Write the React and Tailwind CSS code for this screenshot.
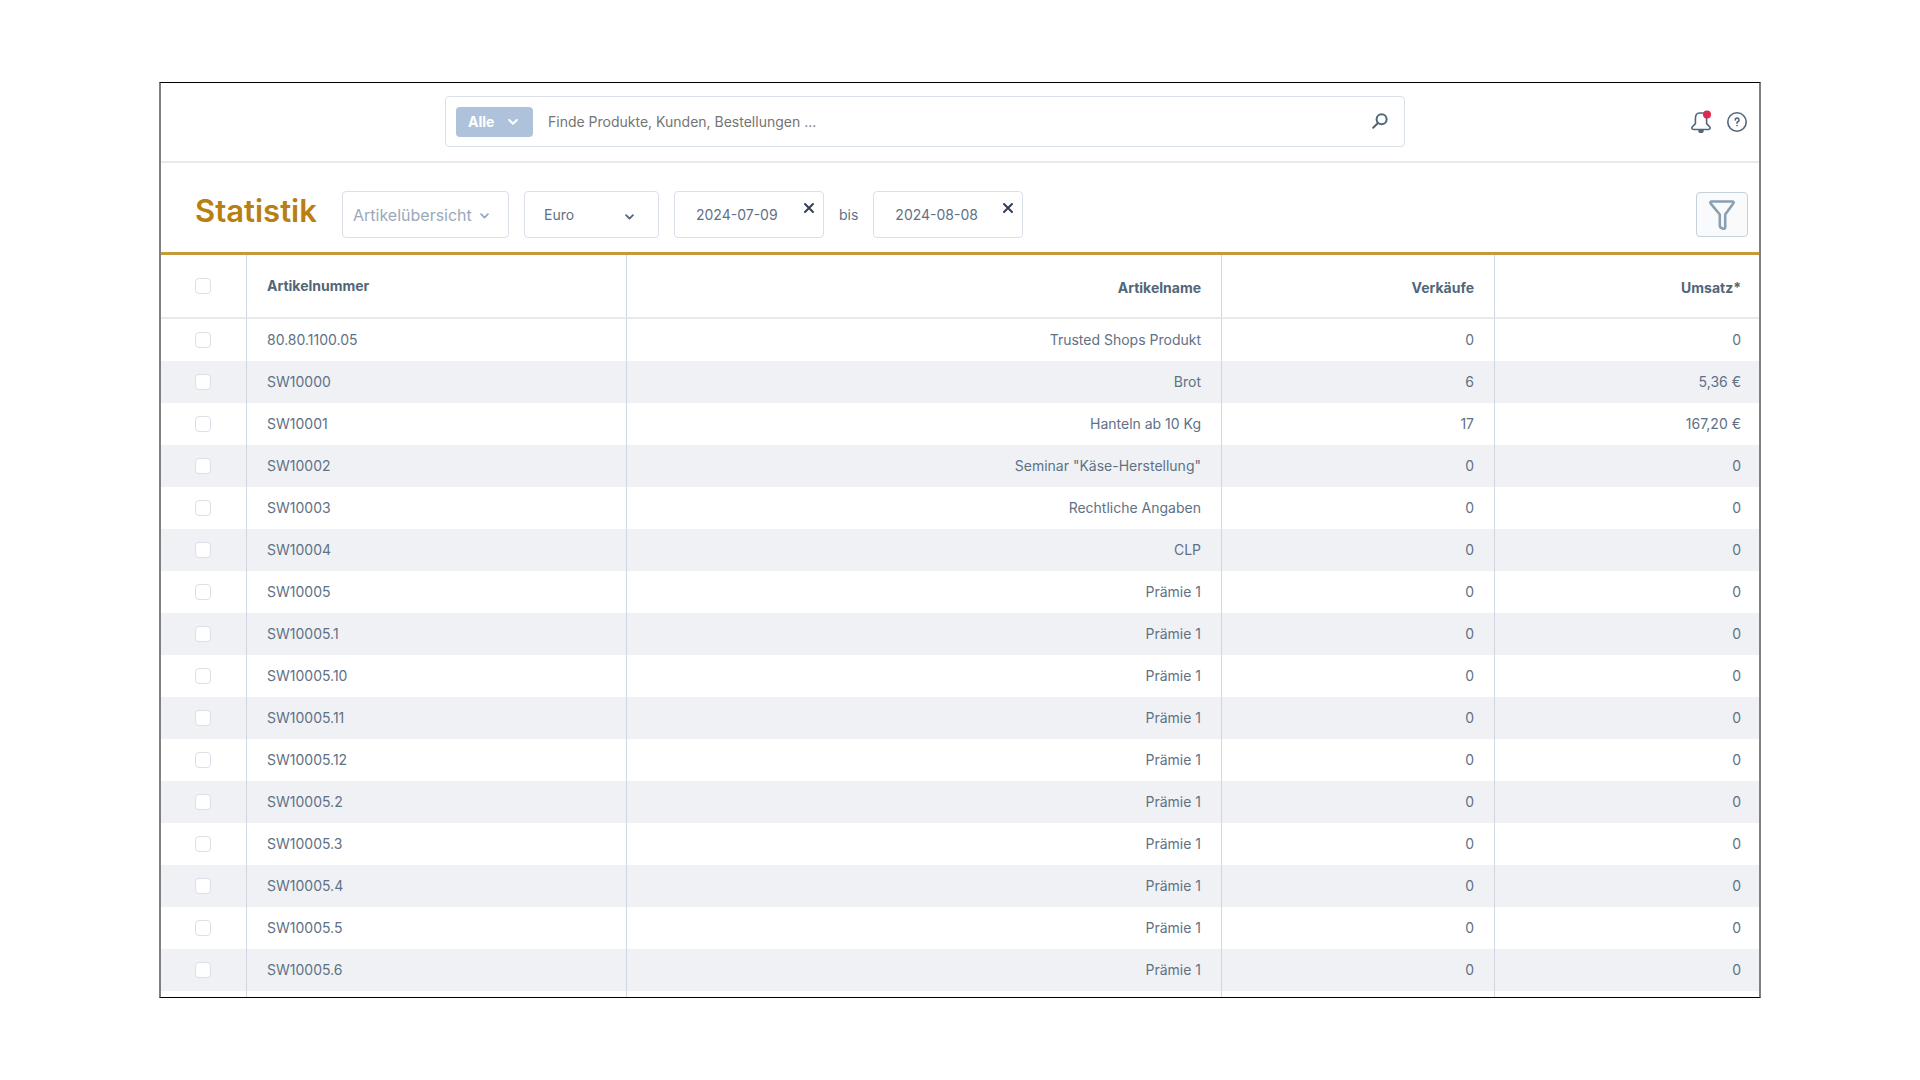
const ROWS = [
    { number: '80.80.1100.05', name: 'Trusted Shops Produkt', sales: '0', revenue: '0' },
    { number: 'SW10000', name: 'Brot', sales: '6', revenue: '5,36 €' },
    { number: 'SW10001', name: 'Hanteln ab 10 Kg', sales: '17', revenue: '167,20 €' },
    { number: 'SW10002', name: 'Seminar "Käse-Herstellung"', sales: '0', revenue: '0' },
    { number: 'SW10003', name: 'Rechtliche Angaben', sales: '0', revenue: '0' },
    { number: 'SW10004', name: 'CLP', sales: '0', revenue: '0' },
    ...['', '.1', '.10', '.11', '.12', '.2', '.3', '.4', '.5', '.6'].map((suffix) => ({
        number: `SW10005${suffix}`,
        name: 'Prämie 1',
        sales: '0',
        revenue: '0',
    })),
];

const CHECKBOX =
    'block h-4 w-4 appearance-none rounded-[4px] border border-[#d9e0e7] bg-white checked:border-[#b8860b] checked:bg-[#b8860b]';

const FIELD = 'h-[47px] rounded-[4px] border border-[#d9e0e7] bg-white';

function Chevron({ className }) {
    return (
        <svg
            viewBox="0 0 10 6"
            fill="none"
            stroke="currentColor"
            strokeWidth="2"
            strokeLinecap="round"
            strokeLinejoin="round"
            className={`pointer-events-none ${className}`}
            aria-hidden="true"
        >
            <path d="M1.2 1 5 4.8 8.8 1" />
        </svg>
    );
}

function DateField({ label, value }) {
    return (
        <div className={`${FIELD} flex w-[150px] shrink-0 justify-between pr-2`}>
            <input
                type="text"
                aria-label={label}
                defaultValue={value}
                className="w-[110px] min-w-0 bg-transparent pl-[21px] text-sm text-[#5f7185] outline-none"
            />
            <button type="button" aria-label={`${label} zurücksetzen`} className="mt-[10px] h-3 w-3 text-[#333f55]">
                <svg viewBox="0 0 12 12" stroke="currentColor" strokeWidth="2" strokeLinecap="round" className="h-3 w-3">
                    <path d="M2 2 10 10M10 2 2 10" />
                </svg>
            </button>
        </div>
    );
}

function Header() {
    return (
        <header className="flex h-20 shrink-0 items-start border-b-2 border-[#e6eaef] pt-[13px]">
            <div className="w-[284px] shrink-0" />
            <div className="flex h-[51px] min-w-0 flex-1 items-center rounded-[4px] border border-[#d9e0e7] pl-[10px] pr-4">
                <button
                    type="button"
                    className="flex h-[30px] w-[77px] shrink-0 items-center justify-between rounded-[4px] bg-[#aec3db] pl-3 pr-[15px] text-sm font-bold text-white"
                >
                    Alle
                    <Chevron className="h-[6px] w-[10px]" />
                </button>
                <input
                    type="search"
                    aria-label="Suche"
                    placeholder="Finde Produkte, Kunden, Bestellungen ..."
                    className="h-[30px] min-w-0 flex-1 bg-transparent px-[15px] text-sm text-[#52667a] outline-none placeholder:text-[#757575]"
                />
                <button type="button" aria-label="Suchen" className="mb-[2px] text-[#52667a]">
                    <svg viewBox="0 0 16 16" fill="none" stroke="currentColor" strokeWidth="2" strokeLinecap="round" className="h-4 w-4">
                        <circle cx="9.6" cy="6.2" r="5" />
                        <path d="M6 10 1.2 14.8" />
                    </svg>
                </button>
            </div>
            <div className="flex w-[354px] shrink-0 items-center justify-end gap-4 pr-3 pt-[14px] text-[#52667a]">
                <button type="button" aria-label="Benachrichtigungen">
                    <svg viewBox="0 0 20 23" fill="none" stroke="currentColor" strokeWidth="1.6" strokeLinejoin="round" className="h-[23px] w-5">
                        <path d="M4.4 9C4.4 5.2 5.6 3 8.4 3h3.200C14.4 3 15.600 5.200 15.600 9v4.600l3 3.200c1 1.100.4 2.700-1.100 2.700h-15c-1.500 0-2.100-1.600-1.100-2.700l3-3.200z" />
                        <path d="M8 20.500a2 2 0 0 0 4 0z" fill="currentColor" />
                        <circle cx="16" cy="4.500" r="4" fill="#de294c" stroke="none" />
                    </svg>
                </button>
                <button type="button" aria-label="Hilfe">
                    <svg viewBox="0 0 20 20" fill="none" stroke="currentColor" strokeWidth="1.6" strokeLinecap="round" className="h-5 w-5">
                        <circle cx="10" cy="10" r="9.2" />
                        <path d="M8.200 8a1.900 1.900 0 1 1 2.700 1.700c-.6.300-.9.700-.9 1.300v.300" />
                        <circle cx="10" cy="13.600" r=".4" fill="currentColor" strokeWidth=".8" />
                    </svg>
                </button>
            </div>
        </header>
    );
}

function Toolbar() {
    return (
        <div className="flex h-[92px] shrink-0 items-start border-b-[3px] border-[#c69a3a] pl-[34px] pr-[11px] pt-7">
            <h1 className="w-[147px] shrink-0 text-[31px] leading-[40px] font-semibold text-[#b87f12]">Statistik</h1>
            <div className="relative shrink-0">
                <select
                    aria-label="Statistik auswählen"
                    className={`${FIELD} w-[167px] appearance-none pl-[10px] text-base text-[#9aa9bb] outline-none`}
                >
                    <option>Artikelübersicht</option>
                </select>
                <Chevron className="absolute right-5 top-[22px] h-[6px] w-[9px] text-[#9aa9bb]" />
            </div>
            <div className="relative ml-[15px] shrink-0">
                <select
                    aria-label="Währung"
                    className={`${FIELD} w-[135px] appearance-none pl-[19px] text-sm text-[#5f7185] outline-none`}
                >
                    <option>Euro</option>
                </select>
                <Chevron className="absolute right-[25px] top-[23px] h-[6px] w-[9px] text-[#52667a]" />
            </div>
            <div className="ml-[15px] flex items-center gap-[15px]">
                <DateField label="Von" value="2024-07-09" />
                <span className="text-sm text-[#5f7185]">bis</span>
                <DateField label="Bis" value="2024-08-08" />
            </div>
            <button
                type="button"
                aria-label="Filter"
                className="mt-px ml-auto flex h-[45px] w-[52px] shrink-0 items-center justify-center rounded-[4px] border border-[#c6d0db] bg-[#f9fafc] text-[#8b9eb2]"
            >
                <svg viewBox="0 0 28 32" fill="none" stroke="currentColor" strokeWidth="2.6" strokeLinejoin="round" className="h-8 w-7">
                    <path d="M3.500 2.500h21c1 0 1.500 1 .9 1.800L17.200 15.500V28c0 1.500-1 2-2 1.700l-2.200-.9c-.8-.4-1.200-1-1.200-2V15.500L2.600 4.300C2 3.500 2.500 2.500 3.500 2.500z" />
                </svg>
            </button>
        </div>
    );
}

function ArticleTable() {
    const cell = 'border-r border-[#cfd8e0]';

    return (
        <table className="w-full table-fixed border-separate border-spacing-0 text-sm text-[#5f7185]">
            <colgroup>
                <col className="w-[86px]" />
                <col className="w-[380px]" />
                <col />
                <col className="w-[273px]" />
                <col className="w-[264px]" />
            </colgroup>
            <thead>
                <tr className="h-16 text-[#52667a] *:border-b-2 *:border-b-[#e6eaef]">
                    <th className={`${cell} pl-[34px]`}>
                        <input type="checkbox" aria-label="Alle auswählen" className={CHECKBOX} />
                    </th>
                    <th className={`${cell} pl-5 text-left font-bold`}>Artikelnummer</th>
                    <th className={`${cell} pt-[3px] pr-5 text-right font-bold`}>Artikelname</th>
                    <th className={`${cell} pt-[3px] pr-5 text-right font-bold`}>Verkäufe</th>
                    <th className="pt-[3px] pr-[18px] text-right font-bold">Umsatz*</th>
                </tr>
            </thead>
            <tbody>
                {ROWS.map((row) => (
                    <tr key={row.number} className="h-[42px] even:bg-[#f0f1f5]">
                        <td className={`${cell} pl-[34px]`}>
                            <input type="checkbox" aria-label={`${row.number} auswählen`} className={CHECKBOX} />
                        </td>
                        <td className={`${cell} pl-5`}>{row.number}</td>
                        <td className={`${cell} pr-5 text-right`}>{row.name}</td>
                        <td className={`${cell} pr-5 text-right`}>{row.sales}</td>
                        <td className="pr-[18px] text-right">{row.revenue}</td>
                    </tr>
                ))}
                <tr className="h-[42px]">
                    <td className={cell} />
                    <td className={cell} />
                    <td className={cell} />
                    <td className={cell} />
                    <td />
                </tr>
            </tbody>
        </table>
    );
}

export default function App() {
    return (
        <div className="flex h-screen bg-white px-[159px] py-[82px] font-['Inter',sans-serif]">
            <main className="flex min-w-0 flex-1 flex-col overflow-hidden border-x-2 border-y border-x-[#808080] border-y-black">
                <Header />
                <Toolbar />
                <ArticleTable />
            </main>
        </div>
    );
}
